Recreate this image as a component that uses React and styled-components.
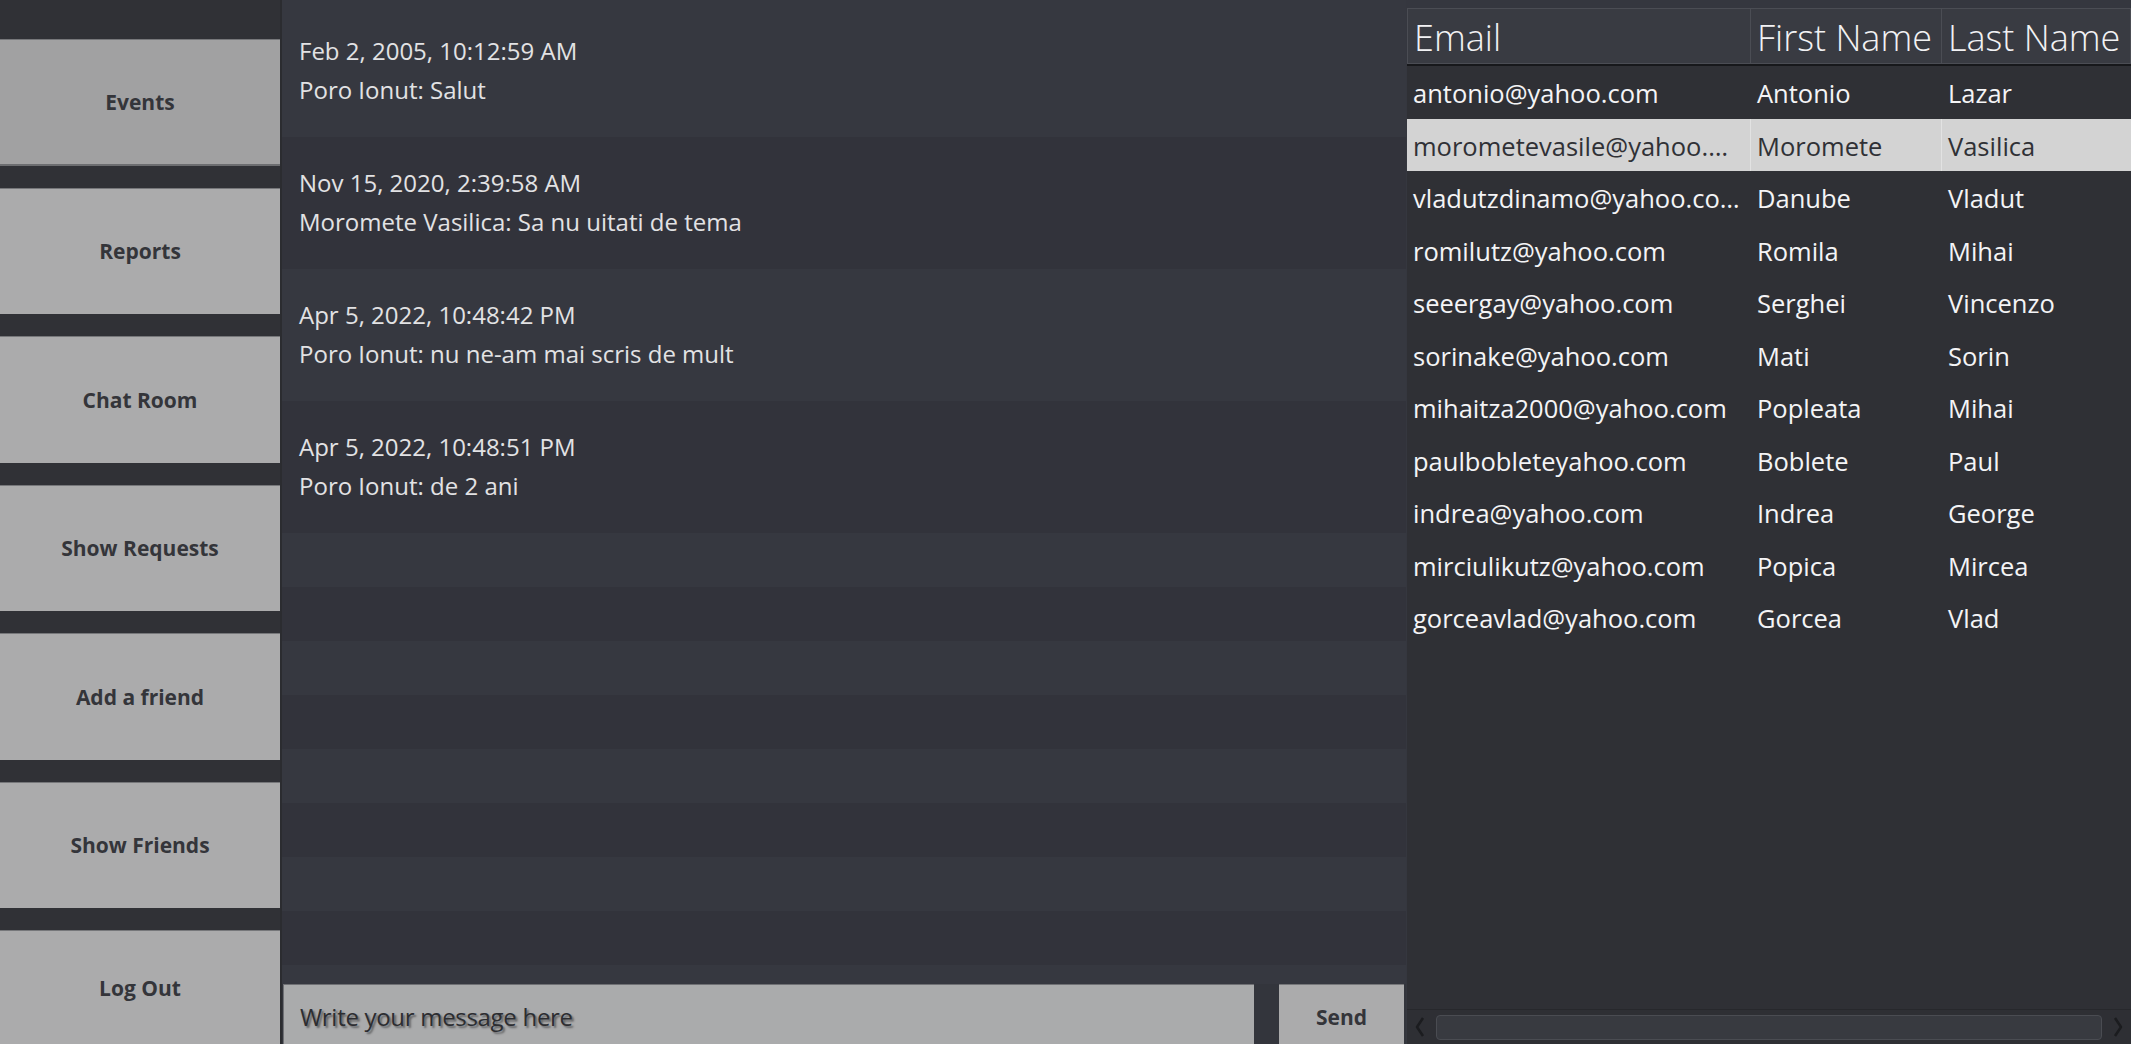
import styled, { createGlobalStyle } from "styled-components";

const GlobalStyle = createGlobalStyle`
  html, body {
    margin: 0;
    padding: 0;
    background: #303136;
    overflow: hidden;
  }
  * {
    box-sizing: border-box;
  }
`;

const Window = styled.div`
  display: flex;
  width: 2131px;
  height: 1044px;
  overflow: hidden;
  font-family: "Open Sans", "Noto Sans", sans-serif;
`;

const Sidebar = styled.div`
  display: flex;
  flex-direction: column;
  gap: 22px;
  width: 282px;
  flex-shrink: 0;
  padding-top: 39px;
  background-color: #303136;
  border-right: 2px solid #2b2c30;
  overflow: hidden;
`;

const NavButton = styled.div`
  display: flex;
  flex-shrink: 0;
  align-items: center;
  justify-content: center;
  height: 126.5px;
  background-color: ${(props) => (props.$active ? "#a1a1a2" : "#ababac")};
  border-top: 1px solid #76777a;
  border-bottom: ${(props) => (props.$active ? "2px solid #6c6d70" : "none")};
  color: #34353a;
  font-size: 21px;
  font-weight: 700;
  cursor: pointer;

  &:last-child {
    height: 114px;
  }
`;

const ChatColumn = styled.div`
  display: flex;
  flex-direction: column;
  width: 1124px;
  flex-shrink: 0;
  background-color: #33353c;
`;

const MessageList = styled.div`
  display: flex;
  flex-direction: column;
  height: 984px;
  overflow: hidden;
`;

const MessageRow = styled.div`
  flex-shrink: 0;
  height: 132px;
  padding: 26px 0 0 17px;
  background-color: ${(props) => (props.$odd ? "#32333b" : "#363840")};
  color: #e2e2e4;
  font-size: 24px;
  line-height: 39px;

  &:first-child {
    height: 137px;
    padding-top: 31px;
  }
`;

const EmptyRow = styled.div`
  flex-shrink: 0;
  height: 54px;
  background-color: ${(props) => (props.$odd ? "#32333b" : "#363840")};
`;

const Composer = styled.div`
  display: flex;
  height: 60px;
  padding: 0 2px 0 1px;
  gap: 25px;
  background-color: #33353c;
`;

const MessageInput = styled.div`
  display: flex;
  align-items: center;
  width: 971px;
  padding: 4px 0 0 16px;
  background-color: #aaabac;
  border-top: 1px solid #6f7074;
  border-left: 1px solid #6f7074;
  color: #2c2d31;
  font-size: 24px;
  letter-spacing: -0.3px;
  text-shadow: 2px 2px 2px #606163;
`;

const SendButton = styled.div`
  display: flex;
  align-items: center;
  justify-content: center;
  flex: 1;
  padding-top: 5px;
  background-color: #ababac;
  border-top: 1px solid #76777a;
  color: #34353a;
  font-size: 21px;
  font-weight: 700;
`;

const TablePanel = styled.div`
  display: flex;
  flex-direction: column;
  flex: 1;
  padding: 8px 0 0 1px;
  background-color: #35373f;
`;

const Table = styled.div`
  display: flex;
  flex-direction: column;
  flex: 1;
  background-color: #2f3035;
  overflow: hidden;
`;

const columns = "344px 191px 1fr";

const HeaderRow = styled.div`
  display: grid;
  grid-template-columns: ${columns};
  height: 58px;
  border-bottom: 2px solid #17181b;
`;

const HeaderCell = styled.div`
  padding: 3px 0 0 6px;
  background-color: #393b42;
  border: 1px solid #4b4d54;
  border-left-width: ${(props) => (props.$first ? "1px" : "0")};
  color: #f2f2f4;
  font-size: 36px;
  font-weight: 300;
  line-height: 52px;
  white-space: nowrap;
  overflow: hidden;
`;

const Body = styled.div`
  display: flex;
  flex-direction: column;
  flex: 1;
`;

const Row = styled.div`
  display: grid;
  grid-template-columns: ${columns};
  height: 52.5px;
  flex-shrink: 0;
  background-color: ${(props) => (props.$selected ? "#d3d3d3" : "#2f3035")};
  color: ${(props) => (props.$selected ? "#303136" : "#f4f4f6")};
`;

const Cell = styled.div`
  padding: 2px 10px 0 6px;
  font-size: 25.5px;
  line-height: 50px;
  white-space: nowrap;
  overflow: hidden;
  text-overflow: ellipsis;
  border-right: 1px solid
    ${(props) => (props.$selected ? "#e2e2e2" : "transparent")};
`;

const ScrollBar = styled.div`
  display: flex;
  align-items: center;
  height: 35px;
  padding: 0 6px 0 6px;
  gap: 9px;
  background-color: #2e2f34;
  border-top: 1px solid #27282c;
`;

const Arrow = styled.div`
  display: flex;
  align-items: center;
  justify-content: center;
  width: 14px;
  height: 26px;
`;

const Thumb = styled.div`
  flex: 1;
  height: 25px;
  margin-top: 1px;
  background-color: #383a40;
  border: 1px solid #4a4c52;
  border-radius: 4px;
`;

const messages = [
  { date: "Feb 2, 2005, 10:12:59 AM", text: "Poro Ionut: Salut" },
  {
    date: "Nov 15, 2020, 2:39:58 AM",
    text: "Moromete Vasilica: Sa nu uitati de tema",
  },
  {
    date: "Apr 5, 2022, 10:48:42 PM",
    text: "Poro Ionut: nu ne-am mai scris de mult",
  },
  { date: "Apr 5, 2022, 10:48:51 PM", text: "Poro Ionut: de 2 ani" },
];

const friends = [
  ["antonio@yahoo.com", "Antonio", "Lazar"],
  ["morometevasile@yahoo.com", "Moromete", "Vasilica"],
  ["vladutzdinamo@yahoo.com", "Danube", "Vladut"],
  ["romilutz@yahoo.com", "Romila", "Mihai"],
  ["seeergay@yahoo.com", "Serghei", "Vincenzo"],
  ["sorinake@yahoo.com", "Mati", "Sorin"],
  ["mihaitza2000@yahoo.com", "Popleata", "Mihai"],
  ["paulbobleteyahoo.com", "Boblete", "Paul"],
  ["indrea@yahoo.com", "Indrea", "George"],
  ["mirciulikutz@yahoo.com", "Popica", "Mircea"],
  ["gorceavlad@yahoo.com", "Gorcea", "Vlad"],
];

const navItems = [
  "Events",
  "Reports",
  "Chat Room",
  "Show Requests",
  "Add a friend",
  "Show Friends",
  "Log Out",
];

function Chevron({ dir }) {
  const points = dir === "left" ? "10,4 4,13 10,22" : "4,4 10,13 4,22";
  return (
    <svg width="14" height="26" viewBox="0 0 14 26">
      <polyline
        points={points}
        fill="none"
        stroke="#1b1c1f"
        strokeWidth="2.5"
        strokeLinejoin="round"
      />
    </svg>
  );
}

function App() {
  return (
    <>
      <GlobalStyle />
      <Window>
        {/* Navigation */}
        <Sidebar>
          {navItems.map((item, i) => (
            <NavButton key={item} $active={i === 0}>
              {item}
            </NavButton>
          ))}
        </Sidebar>

        {/* Chat */}
        <ChatColumn>
          <MessageList>
            {messages.map((m, i) => (
              <MessageRow key={m.date} $odd={i % 2 === 1}>
                <div>{m.date}</div>
                <div>{m.text}</div>
              </MessageRow>
            ))}
            {Array.from({ length: 10 }).map((_, i) => (
              <EmptyRow key={i} $odd={i % 2 === 1} />
            ))}
          </MessageList>
          <Composer>
            <MessageInput>Write your message here</MessageInput>
            <SendButton>Send</SendButton>
          </Composer>
        </ChatColumn>

        {/* Friends table */}
        <TablePanel>
          <Table>
            <HeaderRow>
              <HeaderCell $first>Email</HeaderCell>
              <HeaderCell>First Name</HeaderCell>
              <HeaderCell>Last Name</HeaderCell>
            </HeaderRow>
            <Body>
              {friends.map(([email, first, last], i) => (
                <Row key={email} $selected={i === 1}>
                  <Cell $selected={i === 1}>{email}</Cell>
                  <Cell $selected={i === 1}>{first}</Cell>
                  <Cell>{last}</Cell>
                </Row>
              ))}
            </Body>
            <ScrollBar>
              <Arrow>
                <Chevron dir="left" />
              </Arrow>
              <Thumb />
              <Arrow>
                <Chevron dir="right" />
              </Arrow>
            </ScrollBar>
          </Table>
        </TablePanel>
      </Window>
    </>
  );
}

export default App;
